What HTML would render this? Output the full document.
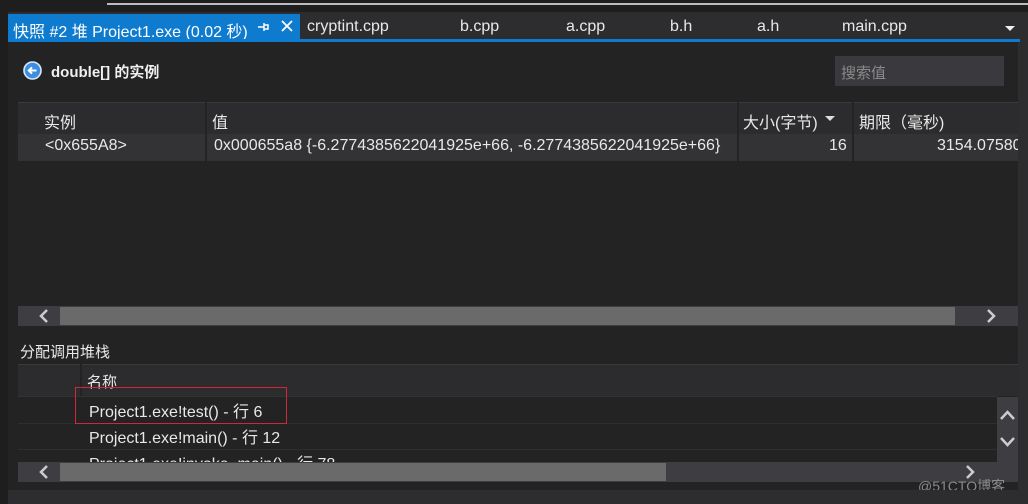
<!DOCTYPE html>
<html><head><meta charset="utf-8"><style>
*{margin:0;padding:0;box-sizing:border-box}
body{width:1028px;height:504px;background:#2b2b2d;position:relative;overflow:hidden;font-family:"Liberation Sans","Noto Sans CJK SC",sans-serif;color:#e8e8e8;font-size:16px}
.a{position:absolute}
.t{white-space:nowrap}
</style></head><body>
<div class="a" style="left:0;top:0;width:1028px;height:12px;background:#1e1e1e"></div>
<div class="a" style="left:107px;top:3px;width:921px;height:2px;background:#bdbdbd"></div>
<div class="a" style="left:0;top:0;width:8px;height:504px;background:#1e1e1e"></div>
<div class="a" style="left:8px;top:12px;width:1020px;height:30px;background:#2d2d30"></div>
<div class="a" style="left:8px;top:14px;width:292px;height:27px;background:#0e7bcf"></div>
<div class="a t" style="left:13px;top:18px;color:#fff">快照 #2 堆 Project1.exe (0.02 秒)</div>
<svg class="a" style="left:256px;top:20px" width="14" height="14"><path d="M2 7H8M8 3V11M8 5H12V9H8" stroke="#fff" stroke-width="1.5" fill="none"/></svg>
<svg class="a" style="left:281px;top:20px" width="12" height="12"><path d="M1 1L11 11M11 1L1 11" stroke="#fff" stroke-width="1.8"/></svg>
<div class="a t" style="left:307px;top:18px">cryptint.cpp</div>
<div class="a t" style="left:460px;top:18px">b.cpp</div>
<div class="a t" style="left:566px;top:18px">a.cpp</div>
<div class="a t" style="left:670px;top:18px">b.h</div>
<div class="a t" style="left:757px;top:18px">a.h</div>
<div class="a t" style="left:842px;top:18px">main.cpp</div>
<div class="a" style="left:1005px;top:26px;border:5px solid transparent;border-top:5px solid #eee"></div>
<div class="a" style="left:8px;top:39px;width:1012px;height:3px;background:#0e7bcf"></div>
<div class="a" style="left:8px;top:42px;width:1010px;height:448px;background:#232324"></div>
<div class="a" style="left:1018px;top:42px;width:10px;height:462px;background:#2d2d30"></div>
<svg class="a" style="left:23px;top:61px" width="19" height="19"><circle cx="9.5" cy="9.5" r="8.5" fill="#3d8ee0" stroke="#d6e8f9" stroke-width="1.6"/><path d="M13.5 9.5H6M9 6.3L5.8 9.5L9 12.7" stroke="#fff" stroke-width="2" fill="none"/></svg>
<div class="a t" style="left:51px;top:61px;font-weight:bold;color:#f0f0f0;font-size:15px">double[] 的实例</div>
<div class="a" style="left:835px;top:56px;width:169px;height:30px;background:#3a3a3e"></div>
<div class="a t" style="left:841px;top:62px;color:#8a8a8a;font-size:15px">搜索值</div>
<div class="a" style="left:18px;top:102px;width:1000px;height:32px;background:#2c2c2e;border-top:1px solid #3a3a3a"></div>
<div class="a" style="left:18px;top:134px;width:1000px;height:27px;background:#333336"></div>
<div class="a" style="left:205px;top:102px;width:2px;height:59px;background:#232324"></div>
<div class="a" style="left:737px;top:102px;width:2px;height:59px;background:#232324"></div>
<div class="a" style="left:852px;top:102px;width:2px;height:59px;background:#232324"></div>
<div class="a t" style="left:44px;top:109px">实例</div>
<div class="a t" style="left:212px;top:109px">值</div>
<div class="a t" style="left:743px;top:109px">大小(字节)</div>
<div class="a" style="left:825px;top:116px;border:5px solid transparent;border-top:5px solid #ddd"></div>
<div class="a t" style="left:859px;top:109px">期限（毫秒)</div>
<div class="a t" style="left:45px;top:137px">&lt;0x655A8&gt;</div>
<div class="a t" style="left:214px;top:137px">0x000655a8 {-6.2774385622041925e+66, -6.2774385622041925e+66}</div>
<div class="a t" style="left:829px;top:137px">16</div>
<div class="a t" style="left:937px;top:137px;width:81px;overflow:hidden">3154.07580</div>
<div class="a" style="left:18px;top:306px;width:1000px;height:20px;background:#3e3e42"></div>
<div class="a" style="left:60px;top:307px;width:895px;height:18px;background:#6a6a6a"></div>
<svg class="a" style="left:38px;top:309px" width="12" height="14"><path d="M9 1L3 7L9 13" stroke="#ccc" stroke-width="2.5" fill="none"/></svg>
<svg class="a" style="left:985px;top:309px" width="12" height="14"><path d="M3 1L9 7L3 13" stroke="#ccc" stroke-width="2.5" fill="none"/></svg>
<div class="a t" style="left:20px;top:341px;font-size:15px">分配调用堆栈</div>
<div class="a" style="left:18px;top:364px;width:1000px;height:32px;background:#2c2c2e;border-top:1px solid #3a3a3a"></div>
<div class="a" style="left:80px;top:364px;width:2px;height:32px;background:#232324"></div>
<div class="a t" style="left:87px;top:371px;font-size:15px">名称</div>
<div class="a" style="left:18px;top:396px;width:979px;height:1px;background:#333"></div>
<div class="a" style="left:18px;top:423px;width:979px;height:1px;background:#2e2e2e"></div>
<div class="a" style="left:18px;top:449px;width:979px;height:1px;background:#2e2e2e"></div>
<div class="a" style="left:75px;top:387px;width:212px;height:37px;border:1px solid #d0283a"></div>
<div class="a t" style="left:89px;top:398px">Project1.exe!test() - 行 6</div>
<div class="a t" style="left:89px;top:424px">Project1.exe!main() - 行 12</div>
<div class="a" style="left:18px;top:450px;width:979px;height:12px;overflow:hidden"><div class="a t" style="left:71px;top:0">Project1.exe!invoke_main() - 行 78</div></div>
<div class="a" style="left:997px;top:397px;width:21px;height:65px;background:#3e3e42"></div>
<svg class="a" style="left:1000px;top:410px" width="15" height="10"><path d="M1 9L7.5 2L14 9" stroke="#ccc" stroke-width="2.5" fill="none"/></svg>
<svg class="a" style="left:1000px;top:437px" width="15" height="10"><path d="M1 1L7.5 8L14 1" stroke="#ccc" stroke-width="2.5" fill="none"/></svg>
<div class="a" style="left:18px;top:462px;width:1000px;height:20px;background:#3e3e42"></div>
<div class="a" style="left:60px;top:463px;width:606px;height:18px;background:#6a6a6a"></div>
<svg class="a" style="left:38px;top:465px" width="12" height="14"><path d="M9 1L3 7L9 13" stroke="#ccc" stroke-width="2.5" fill="none"/></svg>
<svg class="a" style="left:964px;top:465px" width="12" height="14"><path d="M3 1L9 7L3 13" stroke="#ccc" stroke-width="2.5" fill="none"/></svg>
<div class="a t" style="left:918px;top:476px;color:#8a8a8a;font-size:14px">@51CTO博客</div>
<div class="a" style="left:8px;top:490px;width:1010px;height:14px;background:#2d2d30"></div>
</body></html>
